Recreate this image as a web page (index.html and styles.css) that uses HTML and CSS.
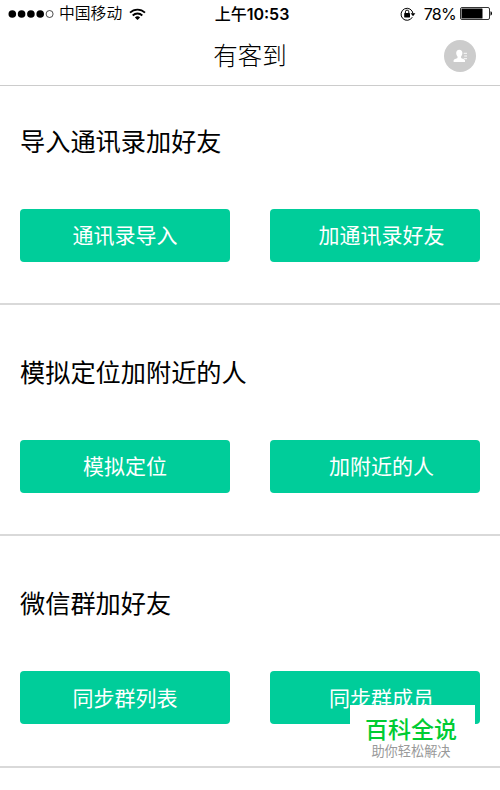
FILE: index.html
```
<!DOCTYPE html>
<html lang="zh-CN">
<head>
    <meta charset="UTF-8">
    <title>有客到</title>
    <link rel="stylesheet" href="styles.css">
</head>
<body>
    <div class="status-bar">
        <div class="status-left">
            <svg class="signal" width="46" height="10" viewBox="0 0 46 10">
                <circle cx="4.3" cy="5" r="3.8"/>
                <circle cx="13.6" cy="5" r="3.8"/>
                <circle cx="22.9" cy="5" r="3.8"/>
                <circle cx="32.2" cy="5" r="3.8"/>
                <circle cx="41.6" cy="5" r="3.5" fill="none" stroke="#000" stroke-width="0.7"/>
            </svg>
            <span class="carrier">中国移动</span>
            <svg class="wifi" width="17" height="13" viewBox="0 0 17 13">
                <g fill="none" stroke="#000" stroke-width="1.8">
                    <path d="M1 4.7C5.2 .5 11.8 .5 16 4.7"/>
                    <path d="M3.7 7.5C6.4 4.8 10.6 4.8 13.3 7.5"/>
                </g>
                <path d="M5.9 9.4C7.3 8 9.7 8 11.1 9.4L8.5 12Z"/>
            </svg>
        </div>
        <div class="status-time"><span class="period">上午</span>10:53</div>
        <div class="status-right">
            <svg class="lock" width="16" height="14" viewBox="0 0 16 14">
                <path d="M12.3 10.2A6 6 0 1 1 13 6.6" fill="none" stroke="#000" stroke-width="1"/>
                <path d="M10.6 6.3h4.8L13 9.3z"/>
                <rect x="4.2" y="6" width="5.8" height="4.4" rx=".4"/>
                <path d="M5.4 6.2V4.8a1.7 1.7 0 0 1 3.4 0v1.4" fill="none" stroke="#000" stroke-width="1"/>
            </svg>
            <span class="percent">78%</span>
            <svg class="battery" width="33" height="13" viewBox="0 0 33 13">
                <rect x=".5" y=".5" width="29" height="12" rx="1.5" fill="#fff" stroke="#000" stroke-width=".8"/>
                <rect x="1.5" y="1.5" width="21" height="10" rx=".5"/>
                <path d="M30.5 4.3c2 .5 2 3.9 0 4.4z"/>
            </svg>
        </div>
    </div>

    <div class="header">
        <h1>有客到</h1>
        <svg class="avatar" width="32" height="32" viewBox="0 0 32 32">
            <circle cx="16" cy="16" r="16" fill="#ccc"/>
            <path d="M15.3 9.8c2.1 0 3.1 1.5 3.1 3.3 0 1.5-.6 2.6-1.3 3.4v1.4c1 .7 3.9 1.1 3.9 2.6v1.4H9.6v-1.4c0-1.5 2.9-1.9 3.9-2.6v-1.4c-.7-.8-1.3-1.9-1.3-3.4 0-1.8 1-3.3 3.1-3.3z" fill="#fff"/>
            <path d="M19.7 13.3H23M20.2 16H23M19.7 18.7H23" stroke="#fff" stroke-width=".9"/>
        </svg>
    </div>

    <div class="section first">
        <h2>导入通讯录加好友</h2>
        <div class="buttons">
            <button>通讯录导入</button>
            <button class="right">加通讯录好友</button>
        </div>
    </div>

    <div class="section">
        <h2>模拟定位加附近的人</h2>
        <div class="buttons">
            <button>模拟定位</button>
            <button class="right">加附近的人</button>
        </div>
    </div>

    <div class="section">
        <h2>微信群加好友</h2>
        <div class="buttons">
            <button>同步群列表</button>
            <button class="right">同步群成员</button>
        </div>
    </div>

    <div class="badge">
        <div class="badge-title">百科全说</div>
        <div class="badge-text">助你轻松解决</div>
    </div>
</body>
</html>
```
FILE: styles.css
```
* {
    box-sizing: border-box;
}

body {
    margin: 0;
    height: 790px;
    position: relative;
    overflow: hidden;
    background-color: #fff;
    color: #000;
    font-family: Inter, "Noto Sans CJK SC", sans-serif;
}

.status-bar {
    display: grid;
    grid-template-columns: 1fr auto 1fr;
    align-items: center;
    height: 28px;
    padding: 0 7px 0 8px;
    font-size: 16px;
    line-height: 28px;
}

.status-left,
.status-right {
    display: flex;
    align-items: center;
}

.status-right {
    justify-content: flex-end;
}

.lock,
.battery {
    margin-bottom: 1px;
}

.carrier {
    margin: 0 7px 0 5px;
    font-size: 15.8px;
    font-weight: 350;
}

.status-time {
    font-weight: 600;
    padding-left: 3px;
}

.period {
    font-weight: 500;
}

.percent {
    margin: 0 4px 0 8px;
    font-size: 16px;
    letter-spacing: -0.7px;
}

.header {
    display: grid;
    grid-template-columns: 32px 1fr 32px;
    align-items: center;
    height: 58px;
    padding: 0 24.5px;
    border-bottom: 1px solid #ccc;
}

h1 {
    grid-column: 2;
    margin: 0;
    padding-bottom: 3px;
    text-align: center;
    font-family: "Noto Sans CJK SC", sans-serif;
    font-size: 24.5px;
    line-height: 54px;
    font-weight: 300;
}

.avatar {
    margin-bottom: 1px;
}

.section {
    height: 231.3px;
    padding: 48px 20px 0;
    border-bottom: 2px solid #d9d9d9;
}

.section.first {
    height: 219px;
    padding-top: 36px;
}

h2 {
    margin: 0;
    height: 86.5px;
    font-size: 25.2px;
    line-height: 40px;
    font-weight: 400;
}

.buttons {
    display: grid;
    grid-template-columns: 1fr 1fr;
    gap: 40px;
}

button {
    height: 53.5px;
    padding: 0 0 2px;
    border: none;
    border-radius: 4px;
    background-color: #00cd9a;
    color: #fff;
    font-family: inherit;
    font-size: 21px;
}

button.right {
    padding-left: 13px;
}

.badge {
    position: absolute;
    left: 350px;
    top: 705px;
    width: 125px;
    height: 60px;
    padding-top: 10px;
    background-color: #fff;
    text-align: center;
}

.badge-title {
    font-size: 23px;
    line-height: 30px;
    font-weight: 500;
    color: #0c3;
    padding-right: 3px;
}

.badge-text {
    font-size: 13.2px;
    line-height: 13px;
    color: #999;
    padding-right: 3px;
}
```
